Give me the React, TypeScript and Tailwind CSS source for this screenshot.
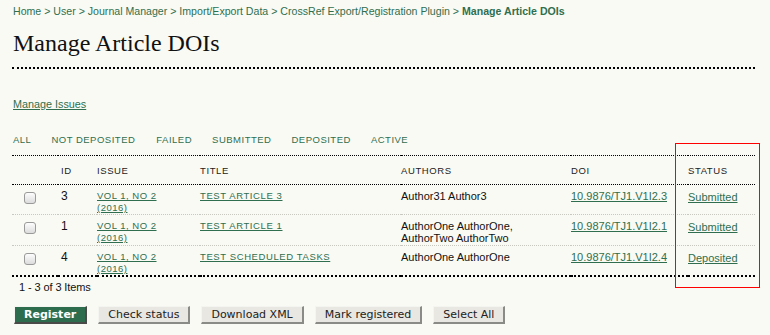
import React from 'react';

const green = 'text-[#2f6f4f]';

const rows = [
  { id: '3', title: 'TEST ARTICLE 3', authors: ['Author31 Author3'], doi: '10.9876/TJ1.V1I2.3', status: 'Submitted' },
  { id: '1', title: 'TEST ARTICLE 1', authors: ['AuthorOne AuthorOne,', 'AuthorTwo AuthorTwo'], doi: '10.9876/TJ1.V1I2.1', status: 'Submitted' },
  { id: '4', title: 'TEST SCHEDULED TASKS', authors: ['AuthorOne AuthorOne'], doi: '10.9876/TJ1.V1I2.4', status: 'Deposited' },
];

const filters = ['ALL', 'NOT DEPOSITED', 'FAILED', 'SUBMITTED', 'DEPOSITED', 'ACTIVE'];

function Button({ label, primary }: { label: string; primary?: boolean }) {
  return (
    <button
      className={`h-[18px] px-[9px] text-[11px] leading-none border border-t-[#f4f4f0] border-l-[#f4f4f0] border-r-2 border-b-2 ${
        primary ? 'bg-[#2d6d4d] text-white font-bold border-r-[#4a4a48] border-b-[#4a4a48]' : 'bg-[#e8e7e1] text-[#222] border-r-[#8a8a86] border-b-[#8a8a86]'
      }`}
      style={{ fontFamily: '"DejaVu Sans", sans-serif' }}
    >
      {label}
    </button>
  );
}

export default function App() {
  return (
    <div className="w-[770px] h-[335px] overflow-hidden bg-[#fafaf4] text-[#111] font-['Liberation_Sans',Arial,sans-serif] relative">
      <div className="pl-[13px] pr-[15px] pt-[4px]">
        {/* Breadcrumb */}
        <div className={`text-[10.6px] leading-[14px] ${green}`}>
          Home &gt; User &gt; Journal Manager &gt; Import/Export Data &gt; CrossRef Export/Registration Plugin &gt;{' '}
          <span className="font-bold">Manage Article DOIs</span>
        </div>

        {/* Title */}
        <h1 className="mt-[11px] font-['Liberation_Serif',serif] text-[24px] leading-[28px] text-[#111]">
          Manage Article DOIs
        </h1>
        <div className="mt-[10px] -ml-[1px] border-t-2 border-dotted border-black" />

        <div className="mt-[27px] leading-[14px]">
          <a className={`text-[10.8px] underline ${green}`}>Manage Issues</a>
        </div>

        {/* Filters */}
        <div className={`mt-[22px] flex gap-[20px] text-[9.5px] leading-[14px] tracking-[0.5px] ${green}`}>
          {filters.map((f, i) => (
            <span key={f} className={i === 2 ? 'ml-[1px]' : ''}>
              {f}
            </span>
          ))}
        </div>

        {/* Table */}
        <table className="mt-[8px] -ml-[1px] w-[743px] table-fixed border-collapse">
          <colgroup>
            <col className="w-[46px]" />
            <col className="w-[39px]" />
            <col className="w-[103px]" />
            <col className="w-[201px]" />
            <col className="w-[170px]" />
            <col className="w-[117px]" />
            <col />
          </colgroup>
          <thead>
            <tr className="border-t border-b border-dotted border-black text-[9.5px] leading-[12px] tracking-[0.6px] text-[#222]">
              <th className="h-[29px] pt-[1px]" />
              <th className="text-left font-normal pl-[3px] pt-[1px]">ID</th>
              <th className="text-left font-normal pt-[1px]">ISSUE</th>
              <th className="text-left font-normal pt-[1px]">TITLE</th>
              <th className="text-left font-normal pt-[1px]">AUTHORS</th>
              <th className="text-left font-normal pt-[1px]">DOI</th>
              <th className="text-left font-normal pt-[1px]">STATUS</th>
            </tr>
          </thead>
          <tbody>
            {rows.map((r, i) => (
              <tr
                key={r.id}
                className={`align-top ${i < rows.length - 1 ? 'border-b border-dotted border-[#c8c8c0]' : 'border-b-2 border-dotted border-black'}`}
              >
                <td className={`pl-[12px] pt-[7px] ${i === 1 ? 'h-[31px]' : 'h-[30px]'}`}>
                  <span className="block w-[12px] h-[12px] rounded-[3px] border border-[#9a9a9a] bg-gradient-to-b from-[#fdfdfd] to-[#dcdcdc]" />
                </td>
                <td className="pl-[3px] pt-[4px] text-[12px] leading-[14px]">{r.id}</td>
                <td className={`pt-[5px] text-[9.5px] leading-[12px] tracking-[0.5px] underline ${green}`}>
                  VOL 1, NO 2
                  <br />
                  (2016)
                </td>
                <td className={`pt-[5px] text-[9.5px] leading-[12px] tracking-[0.6px] underline ${green}`}>{r.title}</td>
                <td className="pt-[5px] text-[11px] leading-[12px] text-[#111]">
                  {r.authors.map((a) => (
                    <div key={a}>{a}</div>
                  ))}
                </td>
                <td className={`pt-[5px] text-[11px] leading-[12px] underline ${green}`}>{r.doi}</td>
                <td className={`pt-[6px] text-[11px] leading-[12px] underline ${green}`}>{r.status}</td>
              </tr>
            ))}
          </tbody>
        </table>

        <div className="mt-[2px] pl-[6px] text-[11px] tracking-[-0.1px] text-[#111]">1 - 3 of 3 Items</div>

        {/* Actions */}
        <div className="mt-[10px] flex gap-[11px] pl-[1px]">
          <Button label="Register" primary />
          <Button label="Check status" />
          <Button label="Download XML" />
          <Button label="Mark registered" />
          <Button label="Select All" />
        </div>
      </div>

      {/* highlight box over status column */}
      <div className="absolute left-[675px] top-[143px] w-[85px] h-[145px] border border-[#ff0000] pointer-events-none" />
    </div>
  );
}
